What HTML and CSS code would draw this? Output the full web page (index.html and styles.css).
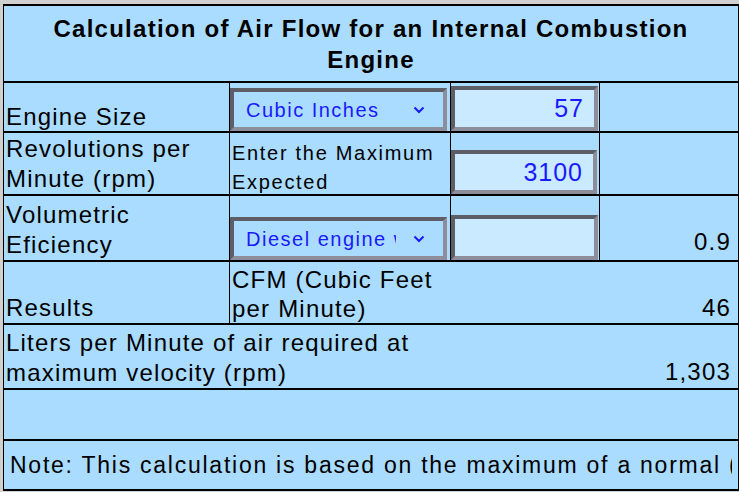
FILE: index.html
```html
<!DOCTYPE html>
<html lang="en">
<head>
<meta charset="utf-8">
<title>Calculation of Air Flow</title>
<link rel="stylesheet" href="styles.css">
</head>
<body>
<div class="sheet">
  <div class="cell title span4">Calculation of Air Flow for an Internal Combustion Engine</div>

  <div class="cell label r1">Engine Size</div>
  <div class="cell ctl">
    <div class="selwrap">
      <select class="pick"><option>Cubic Inches</option><option>Liters</option></select>
      <svg class="chev" width="12" height="8" viewBox="0 0 12 8"><polyline points="1.5,1.5 6,6 10.5,1.5" fill="none" stroke="#1a1aff" stroke-width="2"/></svg>
    </div>
  </div>
  <div class="cell ctl"><input class="num" type="text" value="57"></div>
  <div class="cell"></div>

  <div class="cell label r2">Revolutions per Minute (rpm)</div>
  <div class="cell hint">Enter the Maximum Expected</div>
  <div class="cell ctl"><input class="num short" type="text" value="3100"></div>
  <div class="cell"></div>

  <div class="cell label r3">Volumetric Eficiency</div>
  <div class="cell ctl">
    <div class="selwrap">
      <select class="pick"><option>Diesel engine without turbo</option><option>Gasoline engine</option></select>
      <svg class="chev" width="12" height="8" viewBox="0 0 12 8"><polyline points="1.5,1.5 6,6 10.5,1.5" fill="none" stroke="#1a1aff" stroke-width="2"/></svg>
    </div>
  </div>
  <div class="cell ctl"><input class="num" type="text" value=""></div>
  <div class="cell value r3v">0.9</div>

  <div class="cell label r4">Results</div>
  <div class="cell merged span3 r4m">
    <span class="cfm">CFM (Cubic Feet per Minute)</span>
    <span class="val">46</span>
  </div>

  <div class="cell merged span4 r5m">
    <span class="lpm">Liters per Minute of air required at maximum velocity (rpm)</span>
    <span class="val">1,303</span>
  </div>

  <div class="cell span4"></div>

  <div class="cell note span4"><span class="notetext">Note: This calculation is based on the maximum of a normal (diesel or gasoline) engine running at full load.</span></div>
</div>
</body>
</html>
```

FILE: styles.css
```css
html, body {
  margin: 0;
  padding: 0;
}

body {
  background: #d0d0d0;
  font-family: "Liberation Sans", Arial, sans-serif;
  color: #000;
}

.sheet {
  box-sizing: border-box;
  width: 736px;
  margin: 4px 0 0 3px;
  padding: 2px 1px;
  display: grid;
  grid-template-columns: 225px 220px 148px 138px;
  grid-template-rows: 75px 48px 61px 64px 61px 63px 49px 48px;
  column-gap: 1px;
  row-gap: 2px;
  background: #000;
}

.cell {
  background: #aadcff;
  display: flex;
  align-items: flex-end;
  overflow: hidden;
  font-size: 24px;
  letter-spacing: 1.2px;
  line-height: 29px;
  padding: 0 2px;
}

.span4 { grid-column: span 4; }
.span3 { grid-column: span 3; }
.span2 { grid-column: span 2; }

.title {
  justify-content: center;
  align-items: center;
  text-align: center;
  font-weight: bold;
  line-height: 31px;
  letter-spacing: 1.25px;
  padding: 0 30px;
}

.label.r2 { line-height: 30px; }
.label.r3 { line-height: 30px; }
.label.r4 { padding-bottom: 1px; }

.hint {
  font-size: 20px;
  letter-spacing: 1.7px;
  line-height: 29px;
  align-items: flex-start;
  padding-top: 6px;
}

.value {
  justify-content: flex-end;
  padding-right: 7px;
}
.r3v { padding-bottom: 4px; }

.merged {
  justify-content: space-between;
  padding-right: 7px;
}

.cfm {
  display: block;
  width: 214px;
}

.r4m .val { padding-bottom: 1px; }

.lpm {
  display: block;
  width: 440px;
  line-height: 30px;
}

.r5m .val { padding-bottom: 2px; }

.ctl {
  padding: 0;
  align-items: flex-end;
}

.selwrap {
  position: relative;
  display: flex;
}

.pick {
  appearance: none;
  -webkit-appearance: none;
  box-sizing: border-box;
  width: 217px;
  height: 43px;
  margin: 0;
  border: 4px solid;
  border-color: #5e5e68 #8e8e9a #8e8e9a #5e5e68;
  border-radius: 0;
  background: #aadcff;
  color: #1a1aff;
  font-family: "Liberation Sans", Arial, sans-serif;
  font-size: 20px;
  letter-spacing: 1.5px;
  padding: 0 47px 0 12px;
  outline: none;
}

.chev {
  position: absolute;
  left: 183px;
  top: 18px;
  pointer-events: none;
}

.num {
  box-sizing: border-box;
  width: 147px;
  height: 45px;
  margin: 0;
  border: 4px solid;
  border-color: #5e5e68 #8e8e9a #8e8e9a #5e5e68;
  border-radius: 0;
  background: #c9eaff;
  color: #1a1aff;
  font-family: "Liberation Sans", Arial, sans-serif;
  font-size: 25px;
  letter-spacing: 1px;
  text-align: right;
  padding: 0 10px 0 4px;
  outline: none;
}

.num.short {
  width: 146px;
  height: 44px;
}

.note {
  align-items: center;
  font-size: 23px;
  letter-spacing: 1.75px;
  padding: 0 6px 0 6px;
}

.notetext {
  display: block;
  white-space: nowrap;
  overflow: hidden;
  width: 100%;
}
```
